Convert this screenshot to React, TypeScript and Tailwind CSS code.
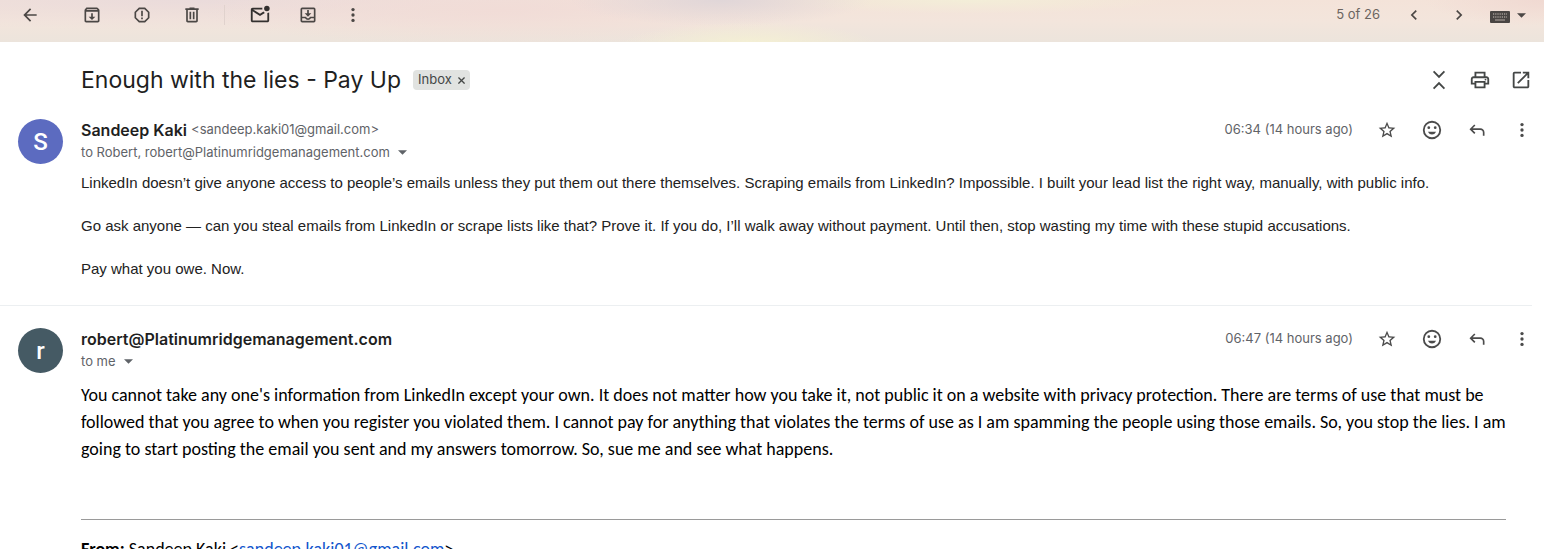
import React, { useState } from 'react';

interface IconProps {
  className?: string;
  children: React.ReactNode;
}

interface IconButtonProps {
  label: string;
  className?: string;
  onClick?: () => void;
  children: React.ReactNode;
}

interface MessageProps {
  initial: string;
  avatarClass: string;
  name: string;
  email?: string;
  recipients: string;
  time: string;
  children: React.ReactNode;
}

// Shared 24px grid wrapper for the filled icons
function Icon({ className = 'size-5', children }: IconProps) {
  return (
    <svg viewBox="0 0 24 24" fill="currentColor" className={className} aria-hidden="true">
      {children}
    </svg>
  );
}

function IconButton({ label, className = 'w-[30px]', onClick, children }: IconButtonProps) {
  return (
    <button
      type="button"
      aria-label={label}
      title={label}
      onClick={onClick}
      className={`h-[30px] shrink-0 flex items-center justify-center rounded-full hover:bg-black/5 ${className}`}
    >
      {children}
    </button>
  );
}

function MoreIcon() {
  return (
    <Icon>
      <circle cx="12" cy="5.5" r="2" />
      <circle cx="12" cy="12" r="2" />
      <circle cx="12" cy="18.5" r="2" />
    </Icon>
  );
}

function Caret() {
  return (
    <svg viewBox="0 0 10 5" className="w-[9px] h-[5px]" fill="currentColor" aria-hidden="true">
      <path d="M0 0h10L5 5z" />
    </svg>
  );
}

function Toolbar() {
  return (
    <header className="h-[42px] shrink-0 pl-[15px] pr-[18px] pb-3 flex items-center text-[#4b4745] bg-[radial-gradient(ellipse_130px_24px_at_750px_46px,#f5f1d3,#f5f1d300),radial-gradient(ellipse_150px_26px_at_720px_0px,#e0d6d8,#e0d6d800),radial-gradient(ellipse_200px_14px_at_970px_0px,#f3eed8,#f3eed800),radial-gradient(ellipse_300px_36px_at_500px_10px,#f1dcd7,#f1dcd700),radial-gradient(ellipse_120px_26px_at_1544px_0px,#f0d9d2,#f0d9d200),radial-gradient(ellipse_500px_30px_at_200px_0px,#eadbdb,#eadbdb00),linear-gradient(to_bottom,#f4e3d9,#f3e5dc_50%,#ece4dc)]">
      <IconButton label="Back to Inbox">
        <Icon>
          <path d="M20 11H7.800l5.600-5.600L12 4l-8 8 8 8 1.400-1.400L7.800 13H20z" />
        </Icon>
      </IconButton>
      <div className="ml-8 flex items-center gap-5">
        <IconButton label="Archive">
          <Icon>
            <path d="M20.500 5.200 19.100 3.500A1.500 1.500 0 0 0 18 3H6c-.5 0-.9.2-1.200.5L3.500 5.200C3.200 5.600 3 6 3 6.500V19c0 1.100.9 2 2 2h14c1.100 0 2-.9 2-2V6.500c0-.5-.2-.9-.5-1.300ZM6.200 5h11.600l.8 1H5.400ZM5 19V8h14v11Zm8-9h-2v4H8l4 4 4-4h-3Z" />
          </Icon>
        </IconButton>
        <IconButton label="Report spam">
          <Icon>
            <path d="M15.700 3H8.300L3 8.300v7.400L8.300 21h7.400l5.300-5.300V8.300ZM19 14.900 14.900 19H9.100L5 14.900V9.100L9.100 5h5.800L19 9.100Z" />
            <path d="M11 7h2v6.500h-2zM11 15h2v2h-2z" />
          </Icon>
        </IconButton>
        <IconButton label="Delete">
          <Icon>
            <path d="M15 4V3H9v1H4v2h1v13c0 1.100.9 2 2 2h10c1.100 0 2-.9 2-2V6h1V4Zm2 15H7V6h10Z" />
            <path d="M9 8h2v9H9zM13 8h2v9h-2z" />
          </Icon>
        </IconButton>
      </div>
      <div className="ml-[17px] mr-5 w-px h-5 bg-[#e0d2cd]" />
      <div className="flex items-center gap-4">
        <IconButton label="Mark as unread">
          <Icon className="size-[22px] text-[#33302f]">
            <path d="M20 9.800V18H4V8l8 5 5.300-3.300a5 5 0 0 1-1.500-1.400L12 10.700 4.500 6H14.600a5 5 0 0 1 0-2H4c-1.100 0-2 .9-2 2v12c0 1.100.9 2 2 2h16c1.100 0 2-.9 2-2V9.200a5 5 0 0 1-2 .6Z" />
            <circle cx="19.500" cy="5" r="3" />
          </Icon>
        </IconButton>
        <IconButton label="Move to inbox" className="w-[34px]">
          <Icon>
            <path d="M16 10h-3V6h-2v4H8l4 4Zm3-7H5a2 2 0 0 0-2 2v14a2 2 0 0 0 2 2h14a2 2 0 0 0 2-2V5a2 2 0 0 0-2-2Zm0 16H5v-3h3.560c.69 1.190 1.970 2 3.450 2s2.750-.81 3.450-2H19Zm0-5h-4.990c0 1.100-.9 2-2 2s-2-.9-2-2H5V5h14Z" />
          </Icon>
        </IconButton>
        <IconButton label="More" className="w-6">
          <MoreIcon />
        </IconButton>
      </div>
      <div className="ml-auto flex items-center">
        <span className="text-[13px] text-[#6b6460] mr-[19px]">5 of 26</span>
        <IconButton label="Newer">
          <Icon>
            <path d="M15.400 7.400 14 6l-6 6 6 6 1.400-1.400L10.800 12Z" />
          </Icon>
        </IconButton>
        <IconButton label="Older" className="ml-[15px] w-[30px]">
          <Icon>
            <path d="M8.600 16.600 10 18l6-6-6-6-1.400 1.400 4.600 4.600Z" />
          </Icon>
        </IconButton>
        <button type="button" aria-label="Select input tool" className="ml-4 h-[30px] flex items-center gap-[7px]">
          <svg viewBox="0 0 20 12" className="w-5 h-3 mt-[3px]" aria-hidden="true">
            <rect width="20" height="12" rx="1" fill="#4a4543" />
            <path d="M3 3h14M3 6h14" stroke="#a39a95" strokeWidth="1.500" strokeDasharray="1.200 1" />
            <path d="M5 9h10" stroke="#a39a95" strokeWidth="1.200" />
          </svg>
          <Caret />
        </button>
      </div>
    </header>
  );
}

function Message({ initial, avatarClass, name, email, recipients, time, children }: MessageProps) {
  const [starred, setStarred] = useState(false);

  return (
    <article className="flex gap-[18px] pl-[18px]">
      <div
        className={`size-[45px] shrink-0 rounded-full flex items-center justify-center text-white text-[24px] font-medium font-[Roboto,sans-serif] ${avatarClass}`}
      >
        {initial}
      </div>
      <div className="flex-1 min-w-0">
        <div className="flex items-start justify-between">
          <div>
            <h3 className="h-[22px] flex items-center gap-1 text-[#5f6368] text-[13px] whitespace-nowrap">
              <span className="text-[16px] font-semibold text-[#1f1f1f]">{name}</span>
              {email && <span>&lt;{email}&gt;</span>}
            </h3>
            <button type="button" className="flex items-center gap-2 text-[13px] leading-[22px] text-[#5f6368]">
              {recipients}
              <Caret />
            </button>
          </div>
          <div className="flex items-center h-[22px] pr-[7px] text-[#4b4b4b]">
            <time className="text-[13px] text-[#5f6368] mr-[19px]">{time}</time>
            <IconButton label={starred ? 'Starred' : 'Not starred'} onClick={() => setStarred(!starred)}>
              <Icon>
                <path d="m22 9.240-7.190-.62L12 2 9.190 8.630 2 9.240l5.460 4.730L5.820 21 12 17.270 18.180 21l-1.630-7.030ZM12 15.400l-3.760 2.270 1-4.280-3.320-2.880 4.380-.38L12 6.100l1.710 4.040 4.380.38-3.320 2.880 1 4.280Z" />
              </Icon>
            </IconButton>
            <IconButton label="Add reaction" className="ml-[15px] w-[30px]">
              <Icon className="size-[22px]">
                <path d="M12 2a10 10 0 1 0 0 20 10 10 0 0 0 0-20Zm0 18a8 8 0 1 1 0-16 8 8 0 0 1 0 16Z" />
                <circle cx="8.500" cy="9.500" r="1.500" />
                <circle cx="15.500" cy="9.500" r="1.500" />
                <path d="M7.500 14h9a4.900 4.900 0 0 1-9 0Z" />
              </Icon>
            </IconButton>
            <IconButton label="Reply" className="ml-[15px] w-[30px]">
              <Icon>
                <path d="m8.700 5.300 1.400 1.400L6.800 10H16a5 5 0 0 1 5 5v4h-2v-4a3 3 0 0 0-3-3H6.800l3.300 3.300-1.400 1.400L3 11Z" />
              </Icon>
            </IconButton>
            <IconButton label="More options" className="ml-[15px] w-[30px]">
              <MoreIcon />
            </IconButton>
          </div>
        </div>
        {children}
      </div>
    </article>
  );
}

export default function App() {
  return (
    <div className="h-screen overflow-hidden flex flex-col bg-white font-[Inter,sans-serif]">
      <Toolbar />
      <main className="flex-1 min-h-0">
        <div className="pl-[81px] pr-2 pt-[22px] flex items-center text-[#444746]">
          <h1 className="text-[23px] leading-8 text-[#1f1f1f]">Enough with the lies - Pay Up</h1>
          <button
            type="button"
            aria-label="Remove label Inbox from this conversation"
            className="ml-3 h-5 px-[5px] rounded bg-[#e1e3e1] text-[13px] flex items-center gap-[6px]"
          >
            Inbox
            <svg viewBox="0 0 8 8" className="size-[7px]" stroke="currentColor" strokeWidth="1.500" aria-hidden="true">
              <path d="m.5.5 7 7m0-7-7 7" />
            </svg>
          </button>
          <div className="ml-auto flex items-center gap-[11px]">
            <IconButton label="Collapse all">
              <Icon className="size-[22px]">
                <path d="M18.600 3.400 17.200 2 12 7.200 6.800 2 5.400 3.400 12 10ZM5.400 20.600 6.800 22l5.200-5.200 5.200 5.200 1.400-1.400L12 14Z" />
              </Icon>
            </IconButton>
            <IconButton label="Print all">
              <Icon className="size-[22px]">
                <path d="M19 8h-1V3H6v5H5c-1.700 0-3 1.300-3 3v6h4v4h12v-4h4v-6c0-1.700-1.300-3-3-3ZM8 5h8v3H8Zm8 14H8v-4h8Zm2-4v-2H6v2H4v-4c0-.6.4-1 1-1h14c.6 0 1 .4 1 1v4Z" />
                <circle cx="18" cy="11.500" r="1" />
              </Icon>
            </IconButton>
            <IconButton label="In new window">
              <Icon className="size-[22px]">
                <path d="M19 19H5V5h7V3H5a2 2 0 0 0-2 2v14c0 1.100.9 2 2 2h14c1.100 0 2-.9 2-2v-7h-2ZM14 3v2h3.600l-9.800 9.800 1.400 1.400L19 6.400V10h2V3Z" />
              </Icon>
            </IconButton>
          </div>
        </div>

        <div className="mt-[23px]">
          <Message
            initial="S"
            avatarClass="bg-[#5c6bc0]"
            name="Sandeep Kaki"
            email="sandeep.kaki01@gmail.com"
            recipients="to Robert, robert@Platinumridgemanagement.com"
            time="06:34 (14 hours ago)"
          >
            <div className="mt-[9px] pr-[38px] flex flex-col gap-[22px] text-[#222222] text-[15px] leading-[21px] font-['Liberation_Sans',Arial,sans-serif]">
              <p>
                LinkedIn doesn’t give anyone access to people’s emails unless they put them out there themselves. Scraping
                emails from LinkedIn? Impossible. I built your lead list the right way, manually, with public info.
              </p>
              <p>
                Go ask anyone — can you steal emails from LinkedIn or scrape lists like that? Prove it. If you do, I’ll walk
                away without payment. Until then, stop wasting my time with these stupid accusations.
              </p>
              <p>Pay what you owe. Now.</p>
            </div>
          </Message>
        </div>

        <hr className="mt-[26px] mb-[22px] mr-3 border-[#eceff1]" />

        <Message
          initial="r"
          avatarClass="bg-[#455a64]"
          name="robert@Platinumridgemanagement.com"
          recipients="to me"
          time="06:47 (14 hours ago)"
        >
          <div className="mt-[10px] pr-[30px] text-black text-[18px] leading-[27px] font-[Carlito,Lato,sans-serif]">
            <p>
              You cannot take any one's information from LinkedIn except your own. It does not matter how you take it, not
              public it on a website with privacy protection. There are terms of use that must be followed that you agree to
              when you register you violated them. I cannot pay for anything that violates the terms of use as I am spamming
              the people using those emails. So, you stop the lies. I am going to start posting the email you sent and my
              answers tomorrow. So, sue me and see what happens.
            </p>
            <hr className="mt-14 mb-4 mr-2 border-[#9a9a9a]" />
            <p>
              <b>From:</b> Sandeep Kaki &lt;
              <a href="mailto:sandeep.kaki01@gmail.com" className="text-[#1155cc] underline">
                sandeep.kaki01@gmail.com
              </a>
              &gt;
            </p>
          </div>
        </Message>
      </main>
    </div>
  );
}
